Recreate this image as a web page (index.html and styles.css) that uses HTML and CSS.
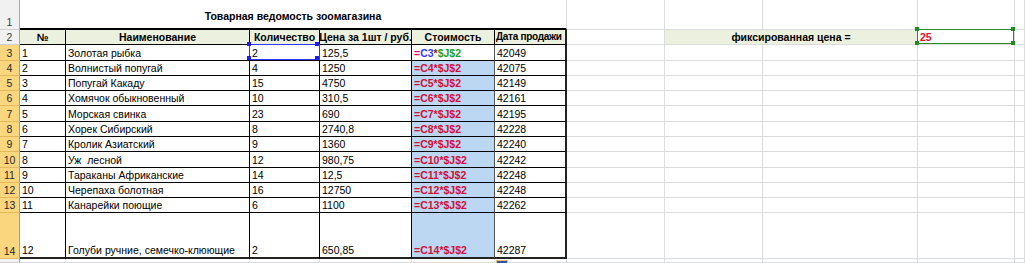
FILE: index.html
```html
<!DOCTYPE html>
<html lang="ru">
<head>
<meta charset="utf-8">
<title>Товарная ведомость зоомагазина</title>
<link rel="stylesheet" href="styles.css">
</head>
<body>
<div class="sheet">
  <!-- row 1 -->
  <div class="rh">1</div>
  <div class="c title">Товарная ведомость зоомагазина</div>
  <div class="c"></div><div class="c"></div><div class="c"></div><div class="c"></div><div class="c"></div>

  <!-- row 2 -->
  <div class="rh">2</div>
  <div class="c t hd">№</div>
  <div class="c t hd">Наименование</div>
  <div class="c t hd">Количество</div>
  <div class="c t hd">Цена за 1шт / руб.</div>
  <div class="c t hd">Стоимость</div>
  <div class="c t hd fr lft">Дата продажи</div>
  <div class="c"></div>
  <div class="c fix">фиксированная цена =</div>
  <div class="c jcell"><span class="val">25</span><span class="sel-green"></span></div>
  <div class="c"></div>

  <!-- row 3 -->
  <div class="rh on">3</div>
  <div class="c t">1</div>
  <div class="c t">Золотая рыбка</div>
  <div class="c t ccell">2<span class="sel-blue"></span></div>
  <div class="c t">125,5</div>
  <div class="c t f act"><span class="eq">=</span><span class="r1">C3</span><span class="op">*</span><span class="r2">$J$2</span></div>
  <div class="c t fr">42049</div>
  <div class="c"></div><div class="c"></div><div class="c"></div><div class="c"></div><div class="c"></div>

  <!-- row 4 -->
  <div class="rh on">4</div>
  <div class="c t">2</div>
  <div class="c t">Волнистый попугай</div>
  <div class="c t">4</div>
  <div class="c t">1250</div>
  <div class="c t f">=C4*$J$2</div>
  <div class="c t fr">42075</div>
  <div class="c"></div><div class="c"></div><div class="c"></div><div class="c"></div><div class="c"></div>

  <!-- row 5 -->
  <div class="rh on">5</div>
  <div class="c t">3</div>
  <div class="c t">Попугай Какаду</div>
  <div class="c t">15</div>
  <div class="c t">4750</div>
  <div class="c t f">=C5*$J$2</div>
  <div class="c t fr">42149</div>
  <div class="c"></div><div class="c"></div><div class="c"></div><div class="c"></div><div class="c"></div>

  <!-- row 6 -->
  <div class="rh on">6</div>
  <div class="c t">4</div>
  <div class="c t">Хомячок обыкновенный</div>
  <div class="c t">10</div>
  <div class="c t">310,5</div>
  <div class="c t f">=C6*$J$2</div>
  <div class="c t fr">42161</div>
  <div class="c"></div><div class="c"></div><div class="c"></div><div class="c"></div><div class="c"></div>

  <!-- row 7 -->
  <div class="rh on">7</div>
  <div class="c t">5</div>
  <div class="c t">Морская свинка</div>
  <div class="c t">23</div>
  <div class="c t">690</div>
  <div class="c t f">=C7*$J$2</div>
  <div class="c t fr">42195</div>
  <div class="c"></div><div class="c"></div><div class="c"></div><div class="c"></div><div class="c"></div>

  <!-- row 8 -->
  <div class="rh on">8</div>
  <div class="c t">6</div>
  <div class="c t">Хорек Сибирский</div>
  <div class="c t">8</div>
  <div class="c t">2740,8</div>
  <div class="c t f">=C8*$J$2</div>
  <div class="c t fr">42228</div>
  <div class="c"></div><div class="c"></div><div class="c"></div><div class="c"></div><div class="c"></div>

  <!-- row 9 -->
  <div class="rh on">9</div>
  <div class="c t">7</div>
  <div class="c t">Кролик Азиатский</div>
  <div class="c t">9</div>
  <div class="c t">1360</div>
  <div class="c t f">=C9*$J$2</div>
  <div class="c t fr">42240</div>
  <div class="c"></div><div class="c"></div><div class="c"></div><div class="c"></div><div class="c"></div>

  <!-- row 10 -->
  <div class="rh on">10</div>
  <div class="c t">8</div>
  <div class="c t">Уж&nbsp; лесной</div>
  <div class="c t">12</div>
  <div class="c t">980,75</div>
  <div class="c t f">=C10*$J$2</div>
  <div class="c t fr">42242</div>
  <div class="c"></div><div class="c"></div><div class="c"></div><div class="c"></div><div class="c"></div>

  <!-- row 11 -->
  <div class="rh on">11</div>
  <div class="c t">9</div>
  <div class="c t">Тараканы Африканские</div>
  <div class="c t">14</div>
  <div class="c t">12,5</div>
  <div class="c t f">=C11*$J$2</div>
  <div class="c t fr">42248</div>
  <div class="c"></div><div class="c"></div><div class="c"></div><div class="c"></div><div class="c"></div>

  <!-- row 12 -->
  <div class="rh on">12</div>
  <div class="c t">10</div>
  <div class="c t">Черепаха болотная</div>
  <div class="c t">16</div>
  <div class="c t">12750</div>
  <div class="c t f">=C12*$J$2</div>
  <div class="c t fr">42248</div>
  <div class="c"></div><div class="c"></div><div class="c"></div><div class="c"></div><div class="c"></div>

  <!-- row 13 -->
  <div class="rh on">13</div>
  <div class="c t">11</div>
  <div class="c t">Канарейки поющие</div>
  <div class="c t">6</div>
  <div class="c t">1100</div>
  <div class="c t f">=C13*$J$2</div>
  <div class="c t fr">42262</div>
  <div class="c"></div><div class="c"></div><div class="c"></div><div class="c"></div><div class="c"></div>

  <!-- row 14 -->
  <div class="rh on">14</div>
  <div class="c t lb">12</div>
  <div class="c t lb">Голуби ручние, семечко-клюющие</div>
  <div class="c t lb">2</div>
  <div class="c t lb">650,85</div>
  <div class="c t f lb">=C14*$J$2</div>
  <div class="c t fr lb">42287</div>
  <div class="c"></div><div class="c"></div><div class="c"></div><div class="c"></div><div class="c"></div>

  <!-- row 15 -->
  <div class="rh"></div>
  <div class="c"></div><div class="c"></div><div class="c"></div><div class="c"></div>
  <div class="c fill-host"><span class="autofill"></span></div>
  <div class="c"></div><div class="c"></div><div class="c"></div><div class="c"></div><div class="c"></div><div class="c"></div>
</div>
</body>
</html>
```

FILE: styles.css
```css
html, body {
  margin: 0;
  padding: 0;
  background: #ffffff;
  overflow: hidden;
}

.sheet {
  width: 1025px;
  height: 263px;
  display: grid;
  grid-template-columns: 20px 46px 184px 70px 92px 83px 72px 98px 98px 155px 97px 1fr;
  grid-template-rows: 30px 15px 16px 15px 15px 15px 16px 15px 15px 16px 15px 15px 15px 46px 1fr;
  font-family: "Liberation Sans", Arial, sans-serif;
  font-size: 10.5px;
  color: #000;
}

.c {
  box-sizing: border-box;
  border-right: 1px solid #dadcdd;
  border-bottom: 1px solid #dadcdd;
  padding: 0 2px 1px 2px;
  display: flex;
  align-items: flex-end;
  white-space: nowrap;
  overflow: hidden;
  line-height: 12px;
  position: relative;
}

.rh {
  box-sizing: border-box;
  background: #f1f1f1;
  color: #3a3a3a;
  border-right: 1px solid #a7a7a7;
  border-bottom: 1px solid #cfcfcf;
  display: flex;
  align-items: flex-end;
  justify-content: center;
  padding-bottom: 1px;
  font-size: 10.5px;
  line-height: 12px;
}

.rh.on {
  background: #fad67f;
  color: #2a2a2a;
  border-bottom-color: #e5b85a;
  border-right-color: #c49a3e;
}

.title {
  grid-column: span 6;
  font-weight: bold;
  justify-content: center;
  align-items: center;
  border-bottom: 2px solid #000;
  padding-top: 4px;
}

.t {
  border-right-color: #000;
  border-bottom-color: #000;
}

.hd {
  background: #ebf1de;
  font-weight: bold;
  justify-content: center;
}

.hd.lft {
  justify-content: flex-start;
  padding-left: 1px;
  padding-right: 0;
  font-size: 10px;
  letter-spacing: -0.3px;
}

.fr {
  border-right: 2px solid #222;
}

.lb {
  border-bottom: 2px solid #222;
}

.f {
  background: #bcd7f2;
  color: #d0103a;
  font-weight: bold;
  border-right-color: #555;
}

.f.act {
  background: #ffffff;
}

.eq { color: #e0105a; }
.r1 { color: #2f3cf0; }
.op { color: #7a2020; }
.r2 { color: #1e9e2e; }

.fix {
  grid-column: span 2;
  background: #ebf1de;
  font-weight: bold;
  justify-content: center;
}

.jcell,
.ccell {
  overflow: visible;
}

.jcell .val {
  color: #e01030;
  font-weight: bold;
}

.sel-green {
  position: absolute;
  z-index: 3;
  left: -1px;
  top: -1px;
  right: 0;
  bottom: 0;
  border: 1px solid #2e8b2e;
}

.sel-green::before {
  content: "";
  position: absolute;
  width: 4px;
  height: 4px;
  background: #1f8a1f;
  left: -3px;
  top: -3px;
  box-shadow: 96px 0 0 #1f8a1f, 0 14px 0 #1f8a1f, 96px 14px 0 #1f8a1f;
}

.sel-blue {
  position: absolute;
  z-index: 3;
  left: -1px;
  top: -1px;
  right: -1px;
  bottom: 0;
  border: 1px solid #3333ff;
}

.sel-blue::before {
  content: "";
  position: absolute;
  width: 4px;
  height: 4px;
  background: #1e1ee6;
  left: -3px;
  top: -3px;
  box-shadow: 68px 0 0 #1e1ee6, 0 14px 0 #1e1ee6, 68px 14px 0 #1e1ee6;
}

.fill-host {
  overflow: visible;
}

.autofill {
  position: absolute;
  z-index: 3;
  left: 84px;
  top: 1px;
  width: 10px;
  height: 4px;
  border: 1px solid #e0c060;
  border-bottom: none;
  background: #ffffff;
  box-shadow: inset 0 2px 0 #3a50b0;
}
```
